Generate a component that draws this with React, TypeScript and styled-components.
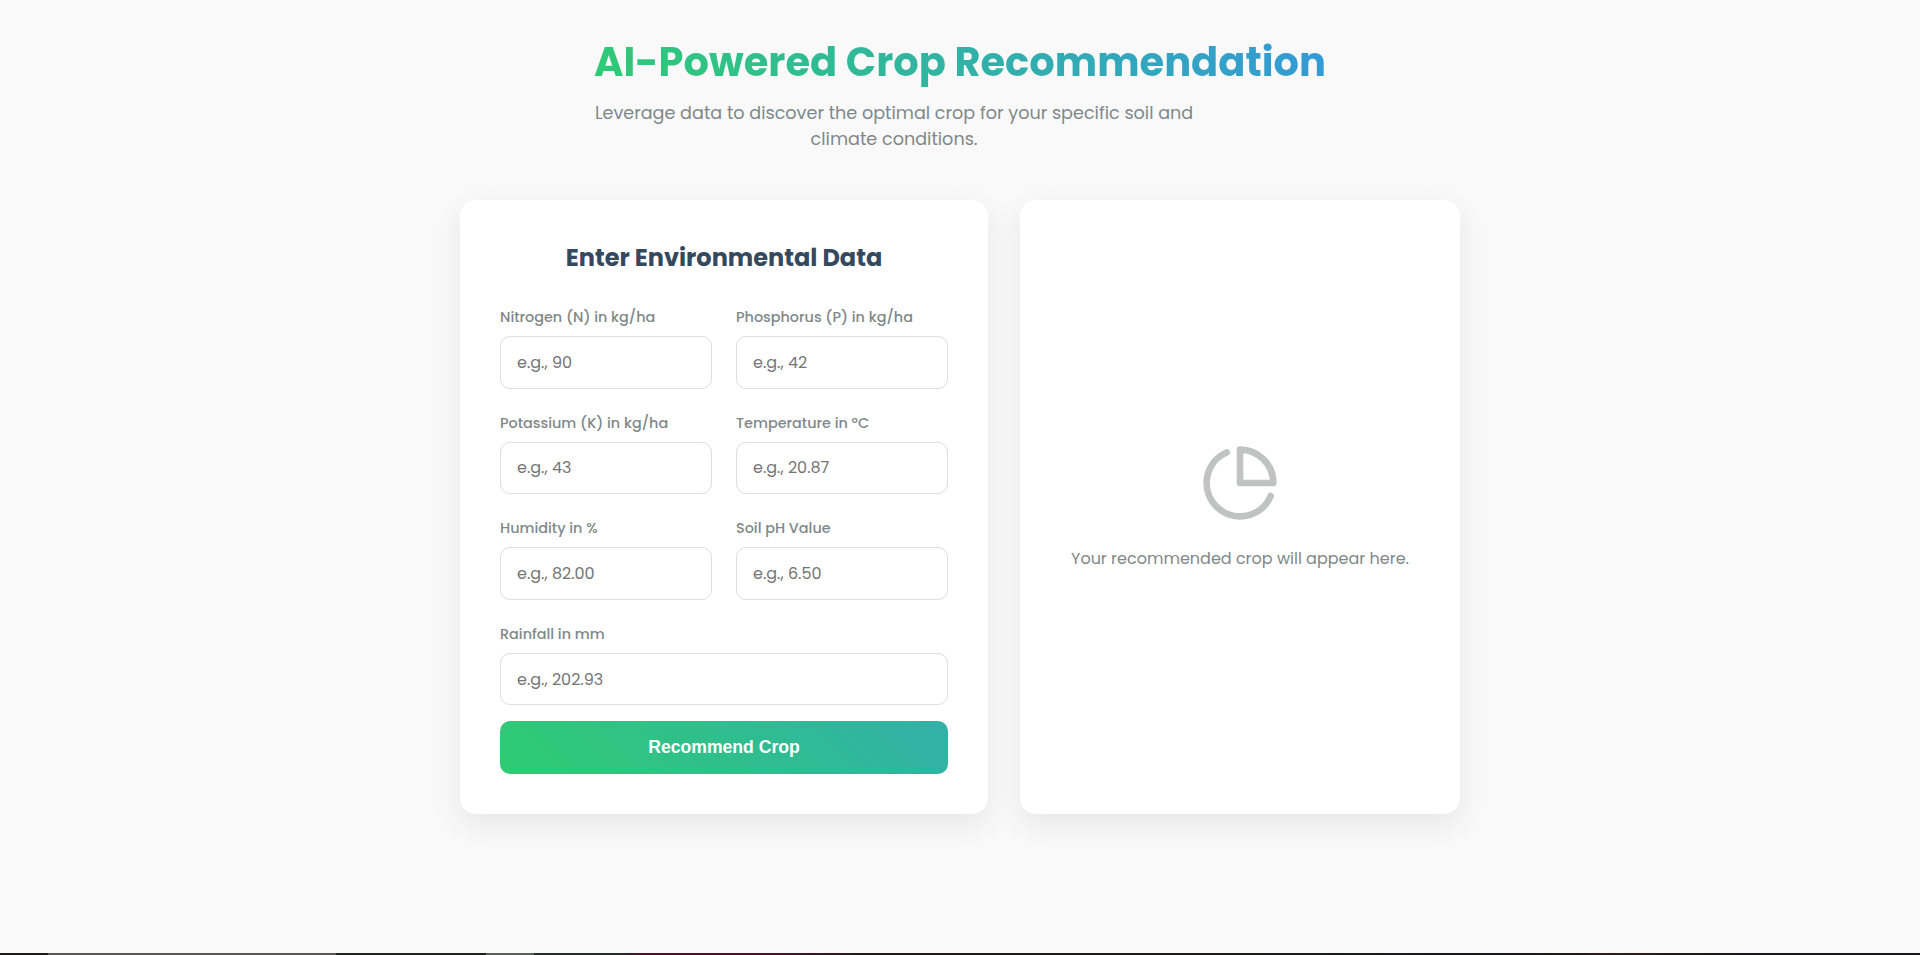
import React from "react";
import styled, { createGlobalStyle } from "styled-components";

const GlobalStyle = createGlobalStyle`
  * {
    box-sizing: border-box;
  }
  body {
    margin: 0;
    background: #f9f9f9;
    font-family: "Poppins", "Inter", sans-serif;
    line-height: 1.5;
    color: #7f8889;
  }
`;

const Page = styled.div`
  display: flex;
  flex-direction: column;
  height: 100vh;
  overflow: hidden;
`;

const Main = styled.main`
  flex: 1;
  display: flex;
  flex-direction: column;
  align-items: center;
  padding-top: 32px;
`;

const Header = styled.header`
  width: fit-content;
  margin-bottom: 48px;
  text-align: center;
`;

const Title = styled.h1`
  margin: 0 0 8px;
  font-size: 40px;
  font-weight: 700;
  line-height: 60px;
  white-space: nowrap;
  color: transparent;
  background: linear-gradient(45deg, #2ecc71, #3498db);
  background-clip: text;
  -webkit-background-clip: text;
`;

const Subtitle = styled.p`
  max-width: 600px;
  margin: 0;
  font-size: 17.6px;
  line-height: 26px;
`;

const Columns = styled.div`
  display: grid;
  grid-template-columns: 1.2fr 1fr;
  gap: 32px;
  width: 1000px;
`;

const Card = styled.section`
  padding: 40px;
  background: #fff;
  border-radius: 16px;
  box-shadow: 0 10px 30px rgba(0, 0, 0, 0.08);
`;

const ResultCard = styled(Card)`
  display: flex;
  flex-direction: column;
  align-items: center;
  justify-content: center;
  gap: 24px;
`;

const CardTitle = styled.h2`
  margin: 0 0 31px;
  font-size: 24px;
  font-weight: 700;
  line-height: 36px;
  text-align: center;
  color: #34495e;
`;

const FieldGrid = styled.div`
  display: grid;
  grid-template-columns: 1fr 1fr;
  gap: 24px;
  margin-bottom: 16px;
`;

const Field = styled.div<{ $wide?: boolean }>`
  display: flex;
  flex-direction: column;
  grid-column: ${(p) => (p.$wide ? "1 / -1" : "auto")};
`;

const Label = styled.label`
  margin-bottom: 8px;
  font-size: 14.4px;
  font-weight: 500;
  line-height: 21px;
`;

const Input = styled.input`
  width: 100%;
  height: 52.6px;
  padding: 0 16px;
  border: 1px solid #dcdedf;
  border-radius: 10px;
  background: #fff;
  font-family: inherit;
  font-size: 16px;
  color: #34495e;

  &::placeholder {
    color: #757575;
  }
`;

const SubmitButton = styled.button`
  display: block;
  width: 100%;
  height: 52.6px;
  padding: 0;
  border: none;
  border-radius: 10px;
  background: linear-gradient(45deg, #2ecc71, #3498db) 0 0 / 200% auto;
  font-family: "Liberation Sans", Arial, sans-serif;
  font-size: 17.6px;
  font-weight: 700;
  color: #fff;
`;

const PieIcon = styled.svg`
  width: 80px;
  height: 80px;
  fill: none;
  stroke: #848988;
  stroke-width: 2;
  stroke-linecap: round;
  stroke-linejoin: round;
  opacity: 0.5;
`;

const ResultText = styled.p`
  margin: 0;
  font-size: 16px;
`;

const BottomStrip = styled.footer`
  height: 2px;
  background: linear-gradient(
    90deg,
    #1d1815 0 48px,
    #5a5555 48px 336px,
    #1e211c 336px 486px,
    #5a615b 486px 534px,
    #262e2b 534px 620px,
    #45122a 640px 760px,
    #241a1b 860px,
    #1b1c1b 1280px,
    #17161a 1500px,
    #2a1d18 1620px,
    #17161a 1760px
  );
`;

const fields = [
  { id: "nitrogen", label: "Nitrogen (N) in kg/ha", example: "90" },
  { id: "phosphorus", label: "Phosphorus (P) in kg/ha", example: "42" },
  { id: "potassium", label: "Potassium (K) in kg/ha", example: "43" },
  { id: "temperature", label: "Temperature in ºC", example: "20.87" },
  { id: "humidity", label: "Humidity in %", example: "82.00" },
  { id: "ph", label: "Soil pH Value", example: "6.50" },
  { id: "rainfall", label: "Rainfall in mm", example: "202.93", wide: true },
];

export default function App() {
  return (
    <Page>
      <GlobalStyle />
      <Main>
        <Header>
          <Title>AI-Powered Crop Recommendation</Title>
          <Subtitle>
            Leverage data to discover the optimal crop for your specific soil and climate conditions.
          </Subtitle>
        </Header>
        <Columns>
          <Card>
            <CardTitle>Enter Environmental Data</CardTitle>
            <FieldGrid>
              {fields.map((f) => (
                <Field key={f.id} $wide={f.wide}>
                  <Label htmlFor={f.id}>{f.label}</Label>
                  <Input id={f.id} placeholder={`e.g., ${f.example}`} />
                </Field>
              ))}
            </FieldGrid>
            <SubmitButton type="button">Recommend Crop</SubmitButton>
          </Card>
          <ResultCard>
            <PieIcon viewBox="0 0 24 24">
              <path d="M21.21 15.89A10 10 0 1 1 8 2.83" />
              <path d="M22 12A10 10 0 0 0 12 2v10z" />
            </PieIcon>
            <ResultText>Your recommended crop will appear here.</ResultText>
          </ResultCard>
        </Columns>
      </Main>
      <BottomStrip />
    </Page>
  );
}
